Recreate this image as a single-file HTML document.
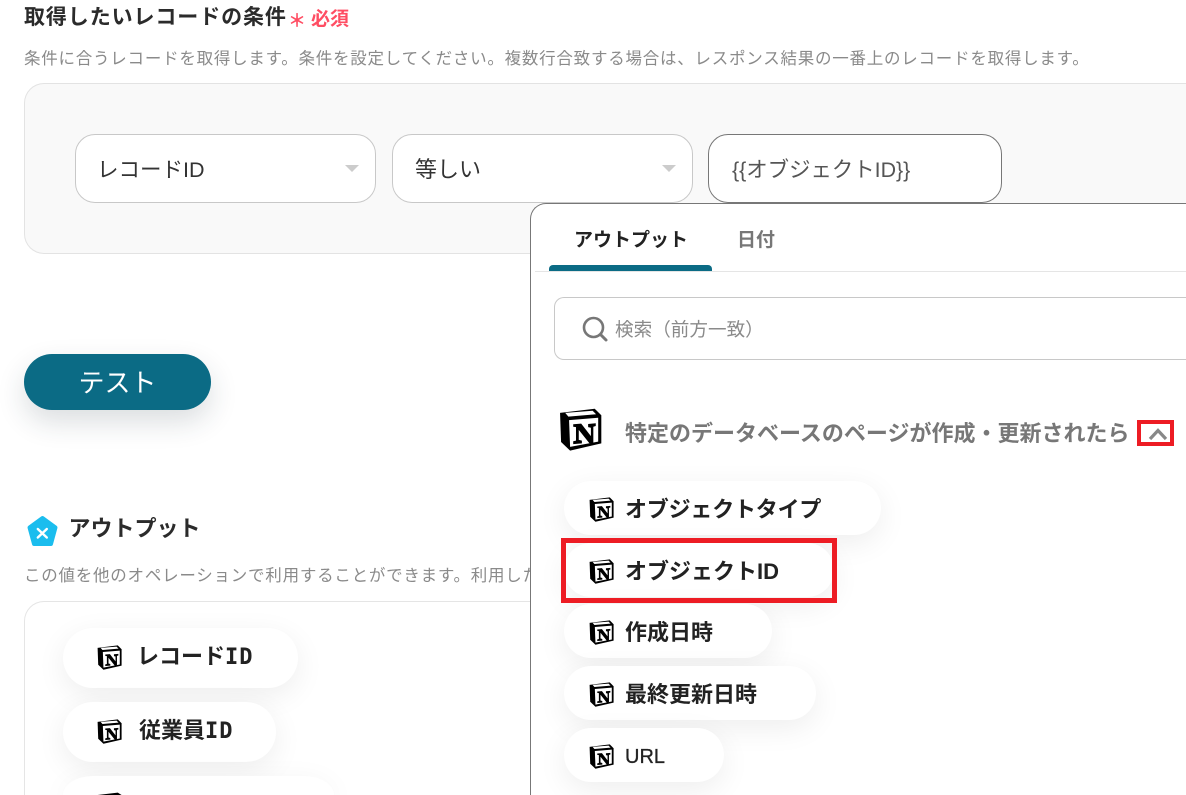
<!DOCTYPE html>
<html lang="ja"><head><meta charset="utf-8"><style>
html,body{margin:0;padding:0;width:1186px;height:795px;overflow:hidden;background:#fff}
body{font-family:"Liberation Sans","Noto Sans CJK JP",sans-serif;color:#222}
#root{position:absolute;left:0;top:0;width:1186px;height:795px;overflow:hidden;background:#fff}
.a{position:absolute;white-space:nowrap}
.box{position:absolute;box-sizing:border-box;background:#fff}
.sel{border:1px solid #c8c8c8;border-radius:20px;height:69px;top:134px}
.tri{position:absolute;width:0;height:0;border-left:7px solid transparent;border-right:7px solid transparent;border-top:7px solid #ccc;top:165px}
.pill{position:absolute;background:#fff;box-shadow:0 8px 30px rgba(0,0,0,.07)}
.pill svg{position:absolute}
.pill span{position:absolute;white-space:nowrap;font-weight:700;color:#222}
.r span{left:61px;top:2px;line-height:52px;font-size:22px}
.r{left:564px;height:54px;border-radius:27px}
.r svg{left:25px;top:15px;width:25px;height:27px}
.l{left:63px;height:60px;border-radius:30px}
.l span{left:76px;top:1px;line-height:56px;font-size:22px}
.l svg{left:34px;top:16px;width:25px;height:27px}
.m{font-family:"DejaVu Sans Mono",monospace;letter-spacing:1px}
</style></head><body>
<div id="root">
<svg width="0" height="0" style="position:absolute"><defs>
<symbol id="n" viewBox="28 26 124 126">
<path d="M31 41 131 29 150 48V129L60 150 34 125Z" fill="#000"/>
<path d="M46 41 125 35 135 45 55 52Z" fill="#fff"/>
<path d="M57 62 141 55V124L60 139Z" fill="#fff"/>
<path d="M69 74 92 72 120 108V84L112 82V73L134 71V79L127 81V128L116 129 85 90V119L94 121V129L69 131V123L77 121V82L69 81Z" fill="#000"/>
</symbol></defs></svg>

<div class="a" style="left:24px;top:4px;font-size:21px;line-height:28px;font-weight:700;letter-spacing:.9px;color:#2b2b2b">取得したいレコードの条件</div>
<div class="a" style="left:288px;top:7px;font-size:18px;line-height:28px;font-weight:700;color:#ff4d63">＊</div>
<div class="a" style="left:311px;top:6px;font-size:19px;line-height:28px;font-weight:700;color:#ff4d63">必須</div>
<div class="a" style="left:24px;top:47px;font-size:16.5px;line-height:24px;letter-spacing:.76px;color:#8a8a8a">条件に合うレコードを取得します。条件を設定してください。複数行合致する場合は、レスポンス結果の一番上のレコードを取得します。</div>

<div class="box" style="left:24px;top:83px;width:1162px;height:171px;background:#f9f9f9;border:1px solid #e3e3e3;border-right:none;border-radius:20px 0 0 20px"></div>
<div class="box sel" style="left:75px;width:301px"></div>
<div class="a" style="left:97px;top:154px;font-size:21.5px;line-height:32px;color:#333">レコードID</div>
<div class="tri" style="left:345px"></div>
<div class="box sel" style="left:392px;width:301px"></div>
<div class="a" style="left:415px;top:154px;font-size:22px;line-height:32px;color:#333">等しい</div>
<div class="tri" style="left:662px"></div>
<div class="box sel" style="left:708px;width:294px;border-color:#777"></div>
<div class="a" style="left:732px;top:154px;font-size:21.4px;line-height:32px;color:#555">{{オブジェクトID}}</div>

<div class="box" style="left:24px;top:354px;width:187px;height:56px;background:#0b6b85;border-radius:28px;box-shadow:0 12px 28px rgba(30,50,60,.16);color:#fff;font-size:26px;line-height:59px;text-align:center">テスト</div>

<svg class="a" style="left:25px;top:514px" width="35" height="34" viewBox="0 0 35 34"><path d="M17.500 4 30.500 13.500 26 30H9L4.500 13.500Z" fill="#1bbdee" stroke="#1bbdee" stroke-width="4" stroke-linejoin="round"/><path d="M12.800 15 21.800 23.500M21.800 15 12.800 23.500" stroke="#fff" stroke-width="2.400" stroke-linecap="round"/></svg>
<div class="a" style="left:68.500px;top:513px;font-size:22px;line-height:32px;font-weight:700;color:#2b2b2b">アウトプット</div>
<div class="a" style="left:24px;top:564px;font-size:16.5px;line-height:24px;letter-spacing:.76px;color:#8a8a8a">この値を他のオペレーションで利用することができます。利用したい場合</div>

<div class="box" style="left:24px;top:601px;width:520px;height:194px;border:1px solid #e5e5e5;border-bottom:none;border-radius:20px 0 0 0"></div>
<div class="pill l" style="top:628px;width:235px"><svg><use href="#n"/></svg><span style="left:74px">レコード<span class="m" style="position:static">ID</span></span></div>
<div class="pill l" style="top:702px;width:213px"><svg><use href="#n"/></svg><span>従業員<span class="m" style="position:static">ID</span></span></div>
<div class="pill l" style="top:776px;width:271px;height:19px;border-radius:30px 30px 0 0 / 19px 19px 0 0"><svg style="top:16px;width:25px;height:3px" viewBox="28 26 124 15" preserveAspectRatio="none"><path d="M31 41 131 29 150 41Z" fill="#000"/></svg></div>

<div class="box" style="left:530px;top:203px;width:656px;height:592px;border:1px solid #777;border-right:none;border-bottom:none;border-radius:16px 0 0 0;z-index:5"></div>
<div style="position:absolute;left:0;top:0;width:1186px;height:795px;z-index:6">
<div class="a" style="left:574px;top:227px;font-size:19px;line-height:28px;font-weight:700;color:#222">アウトプット</div>
<div class="a" style="left:737px;top:227px;font-size:19px;line-height:28px;font-weight:700;color:#777">日付</div>
<div class="a" style="left:535px;top:271px;width:651px;height:1px;background:#e5e5e5"></div>
<div class="a" style="left:549px;top:265px;width:163px;height:6px;background:#0b6b85;border-radius:4px 4px 0 0"></div>

<div class="box" style="left:554px;top:297px;width:632px;height:63px;border:1px solid #c8c8c8;border-right:none;border-radius:10px 0 0 10px"></div>
<svg class="a" style="left:580px;top:315px" width="30" height="30" viewBox="0 0 30 30"><circle cx="13.500" cy="12.500" r="9.500" fill="none" stroke="#777" stroke-width="2.600"/><path d="M20.500 19.500 26 25" stroke="#777" stroke-width="3" stroke-linecap="round"/></svg>
<div class="a" style="left:615px;top:316px;font-size:18.600px;line-height:28px;color:#8a8a8a">検索（前方一致）</div>

<svg class="a" style="left:559px;top:407px;width:43px;height:45px"><use href="#n"/></svg>
<div class="a" style="left:625px;top:418px;font-size:22px;line-height:32px;font-weight:700;color:#777">特定のデータベースのページが作成・更新されたら</div>
<div class="box" style="left:1137px;top:420px;width:37px;height:26px;border:4px solid #ed1c24;background:none"></div>
<svg class="a" style="left:1147px;top:426px" width="22" height="16" viewBox="0 0 22 16"><path d="M3 13 11 4.500 19 13" fill="none" stroke="#888" stroke-width="3.200"/></svg>

<div class="pill r" style="top:481px;width:317px"><svg><use href="#n"/></svg><span style="letter-spacing:-.2px;top:3px">オブジェクトタイプ</span></div>
<div class="pill r" style="top:543px;width:270px"><svg><use href="#n"/></svg><span style="top:3px">オブジェクトID</span></div>
<div class="pill r" style="top:604px;width:208px"><svg><use href="#n"/></svg><span style="top:3px">作成日時</span></div>
<div class="pill r" style="top:666px;width:252px"><svg><use href="#n"/></svg><span style="top:3px">最終更新日時</span></div>
<div class="pill r" style="top:728px;width:160px"><svg><use href="#n"/></svg><span style="font-weight:400;font-size:20px;-webkit-text-stroke:.3px #222;top:3px">URL</span></div>
<div class="box" style="left:561px;top:538px;width:276px;height:65px;border:5px solid #ed1c24;background:none"></div>
</div>
</div>
</body></html>
